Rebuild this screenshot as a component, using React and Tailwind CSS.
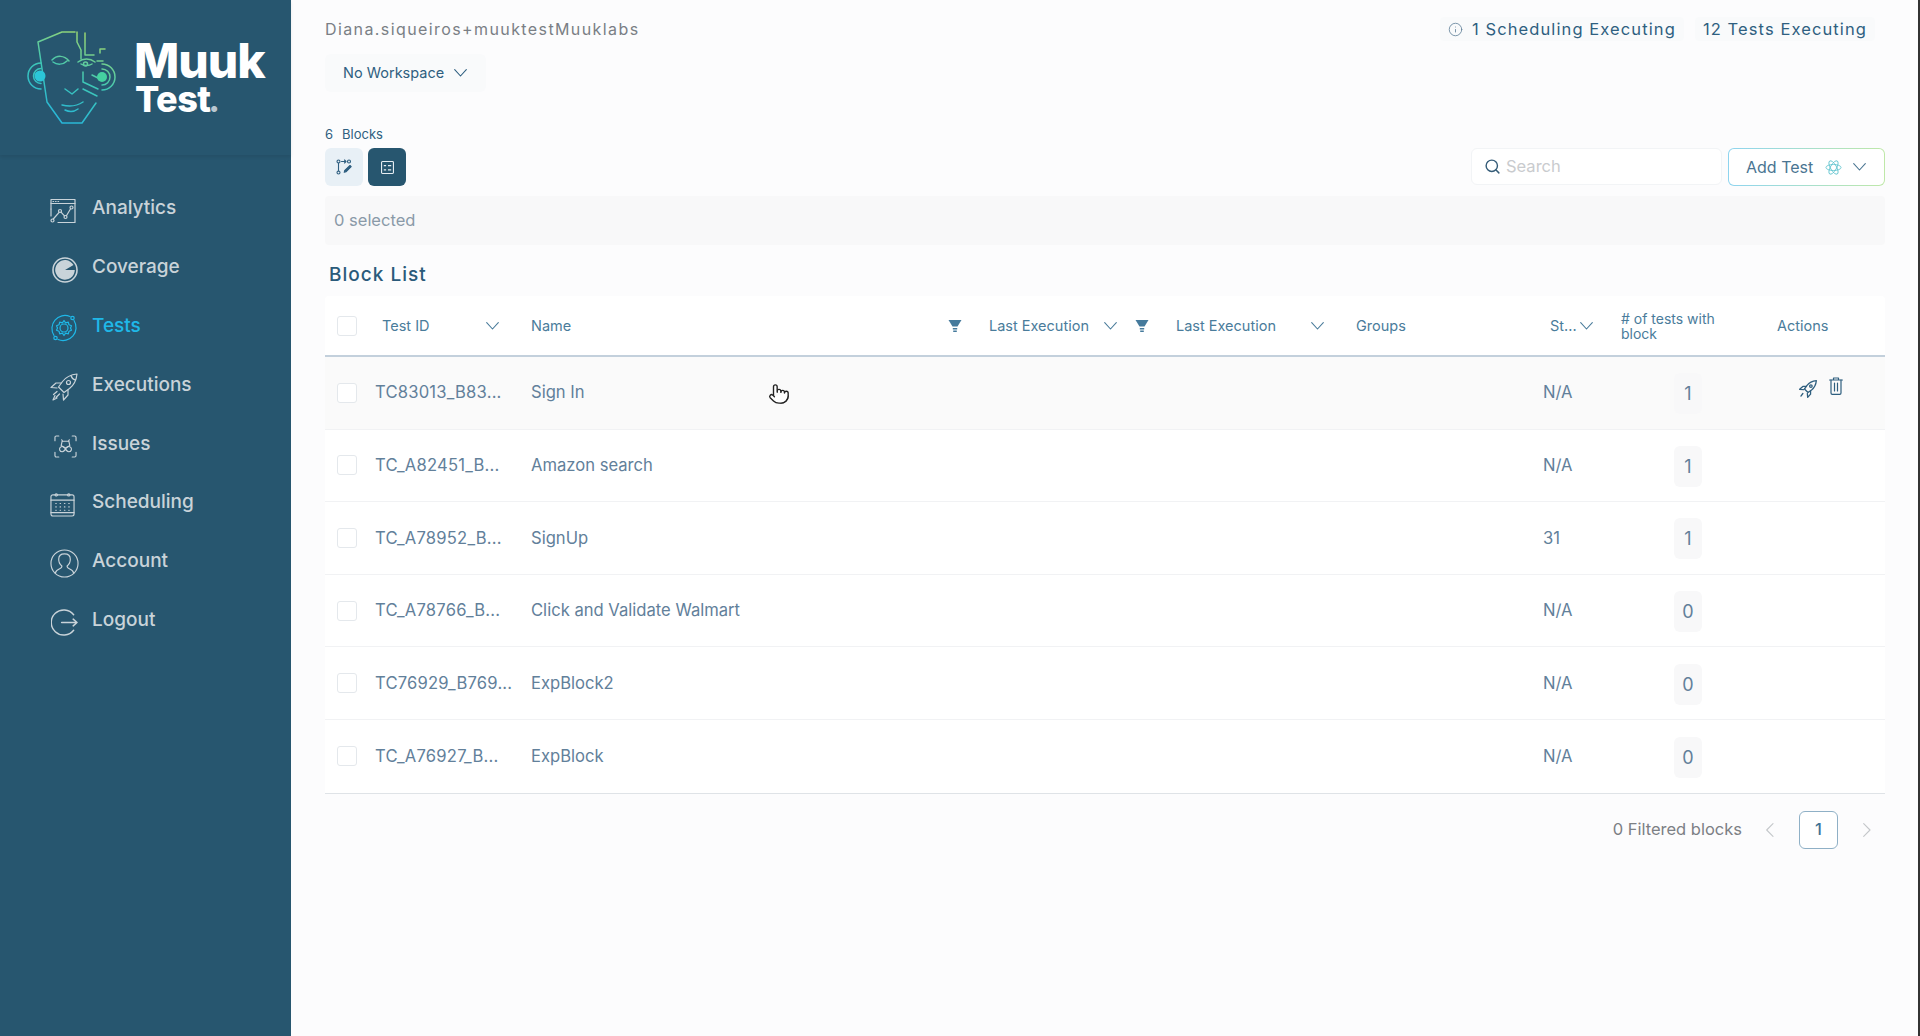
import { Search, Info, Pointer } from 'lucide-react';

const navStroke = { fill: 'none', stroke: 'currentColor', strokeWidth: 1.2, strokeLinecap: 'round', strokeLinejoin: 'round' };

function Chevron({ className = '', dir = 'down' }) {
  const d = { down: 'M.7.7 6.5 7 12.3.7', left: 'M7 .7.7 7 7 13.300', right: 'M.7.7 7 7 .7 13.300' }[dir];
  const box = dir === 'down' ? { viewBox: '0 0 13 8', size: 'w-[13px] h-[8px]' } : { viewBox: '0 0 8 14', size: 'w-[8px] h-[14px]' };
  return (
    <svg viewBox={box.viewBox} className={`${box.size} shrink-0 ${className}`} fill="none" stroke="currentColor" strokeWidth="1.100" strokeLinecap="round" strokeLinejoin="round">
      <path d={d} />
    </svg>
  );
}

function FilterIcon({ className = '' }) {
  return (
    <svg viewBox="0 0 14 14" className={`w-[14px] h-[14px] text-[#457a9c] ${className}`} fill="currentColor">
      <path d="M0.500 1h13L9.500 7.500h-5z" />
      <path d="M4.800 9h4.400v1.500H4.800zM5.200 11.500h3.600V13H5.200z" />
    </svg>
  );
}

function AnalyticsIcon() {
  return (
    <svg viewBox="0 0 26 26" className="w-[26px] h-[26px]" {...navStroke}>
      <path d="M1 11V1.500h24v23H8" />
      <path d="M1 5.500h24" />
      <path d="M3 3.500h.6M5.500 3.500h.6M8 3.500h.6" />
      <path d="M1 11v7" />
      <circle cx="2.500" cy="22.500" r="1.500" />
      <circle cx="10" cy="13" r="1.500" />
      <circle cx="15.500" cy="19" r="1.500" />
      <circle cx="21.500" cy="9.500" r="1.500" />
      <path d="M3.300 21l5.800-6.700M11 14.200l3.500 3.600M16.400 17.700l4.200-6.900" />
    </svg>
  );
}

function CoverageIcon() {
  return (
    <svg viewBox="0 0 26 26" className="w-[26px] h-[26px] ml-[2px]">
      <circle cx="13" cy="13" r="12" fill="none" stroke="currentColor" strokeWidth="1.600" />
      <path d="M13 13l8.500-5A9.800 9.800 0 1 0 22.800 13z" fill="currentColor" />
    </svg>
  );
}

function TestsIcon() {
  return (
    <svg viewBox="0 0 28 28" className="w-[28px] h-[28px]" {...navStroke}>
      <path d="M4 21.500A13 13 0 0 1 20 2.500" />
      <path d="M24 6.500A13 13 0 0 1 8 25.500" />
      <circle cx="22.500" cy="4" r="1.700" />
      <circle cx="5.500" cy="24" r="1.700" />
      <circle cx="14" cy="14" r="4" />
      <path d="M14 6.500l1.600 2.300 2.700-.7.7 2.700 2.500 1-1 2.200 1 2.200-2.500 1-.7 2.700-2.700-.7-1.600 2.300-1.600-2.300-2.700.7-.7-2.700-2.500-1 1-2.200-1-2.200 2.500-1 .7-2.700 2.700.7z" />
    </svg>
  );
}

function RocketIcon() {
  return (
    <svg viewBox="0 0 28 28" className="w-[28px] h-[28px]" {...navStroke}>
      <path d="M27 1c-6 .6-11 3-14.500 7.500L8.500 14l5.500 5.500 5.500-4C24 12 26.400 7 27 1z" />
      <path d="M21 2.500c.5 2 2 3.800 4.500 4.500" />
      <circle cx="18.500" cy="9.500" r="2" />
      <path d="M11 10H6L1 14.500l6 .5" />
      <path d="M18 17v5l-4.500 5-.5-6" />
      <path d="M7 18.500l-3.500 3M9.500 21l-3.500 3.500M5 22.500L3 27l4-2" />
    </svg>
  );
}

function IssuesIcon() {
  return (
    <svg viewBox="0 0 24 24" className="w-[23px] h-[23px] ml-[4px]" {...navStroke}>
      <path d="M1 6V2.500C1 1.600 1.600 1 2.500 1H5M19 1h2.500c.9 0 1.500.6 1.500 1.500V6M23 18v3.500c0 .9-.6 1.500-1.500 1.500H19M5 23H2.500C1.600 23 1 22.400 1 21.500V18" />
      <path d="M9 6.500l-1-1.500M15 6.500l1-1.500" />
      <path d="M8.500 6.500h7l1 4.500-4.500 3-4.500-3z" />
      <path d="M12 14c-1.500-2.500-4-2.500-5.500-1-1.500 1.800-.5 4.500 2 4.500 1.500 0 3-1.500 3.500-3.500zM12 14c1.500-2.500 4-2.500 5.500-1 1.500 1.800.5 4.500-2 4.500-1.500 0-3-1.500-3.500-3.500z" />
    </svg>
  );
}

function SchedulingIcon() {
  return (
    <svg viewBox="0 0 26 26" className="w-[25px] h-[25px]" {...navStroke}>
      <rect x="1" y="3" width="24" height="22" rx="2" />
      <path d="M1 8.500h24M1 21.500h24" />
      <circle cx="6.500" cy="3" r="1.200" />
      <circle cx="19.500" cy="3" r="1.200" />
      <path strokeDasharray="0.5 4" d="M6 12h15M6 15.500h15M6 19h15" />
    </svg>
  );
}

function AccountIcon() {
  return (
    <svg viewBox="0 0 30 30" className="w-[29px] h-[29px]" {...navStroke}>
      <circle cx="15" cy="15" r="14" />
      <path d="M5.500 25c.5-2.500 2-3.500 4.500-4.500 1.800-.7 2.500-1.500 2.300-3-2-1.500-3.300-4-3.300-7C9 7 11.500 5 15 5s6 2 6 5.500c0 3-1.300 5.500-3.300 7-.2 1.500.5 2.300 2.300 3 2.500 1 4 2 4.500 4.500" />
    </svg>
  );
}

function LogoutIcon() {
  return (
    <svg viewBox="0 0 28 28" className="w-[27px] h-[27px] ml-[1px]" fill="none" stroke="currentColor" strokeWidth="1.500" strokeLinecap="round" strokeLinejoin="round">
      <path d="M23.500 6A13 13 0 1 0 23.500 22" />
      <path d="M11 14h16M23 10.500l4 3.500-4 3.500" />
    </svg>
  );
}

const navItems = [
  { label: 'Analytics', Icon: AnalyticsIcon },
  { label: 'Coverage', Icon: CoverageIcon },
  { label: 'Tests', Icon: TestsIcon, active: true },
  { label: 'Executions', Icon: RocketIcon },
  { label: 'Issues', Icon: IssuesIcon },
  { label: 'Scheduling', Icon: SchedulingIcon },
  { label: 'Account', Icon: AccountIcon },
  { label: 'Logout', Icon: LogoutIcon },
];

const rows = [
  { id: 'TC83013_B83...', name: 'Sign In', status: 'N/A', count: 1, hovered: true },
  { id: 'TC_A82451_B...', name: 'Amazon search', status: 'N/A', count: 1 },
  { id: 'TC_A78952_B...', name: 'SignUp', status: '31', count: 1 },
  { id: 'TC_A78766_B...', name: 'Click and Validate Walmart', status: 'N/A', count: 0 },
  { id: 'TC76929_B769...', name: 'ExpBlock2', status: 'N/A', count: 0 },
  { id: 'TC_A76927_B...', name: 'ExpBlock', status: 'N/A', count: 0 },
];

const tableCols = 'grid grid-cols-[50px_156px_431px_169px_215px_187px_78px_156px_118px]';

function Logo() {
  return (
    <div className="h-[155px] flex items-start shadow-[0_2px_3px_rgba(0,0,0,0.08)]">
      <svg viewBox="25 28 95 100" className="w-[95px] h-[100px] ml-[25px] mt-[28px]" fill="none" strokeWidth="1.500" strokeLinecap="round" strokeLinejoin="round">
        <defs>
          <linearGradient id="face" gradientUnits="userSpaceOnUse" x1="95" y1="30" x2="55" y2="125">
            <stop offset="0" stopColor="#a6d667" />
            <stop offset="0.5" stopColor="#3ec7b6" />
            <stop offset="1" stopColor="#25b4dc" />
          </linearGradient>
        </defs>
        <g stroke="url(#face)">
          <path d="M75 32H62L38 42l9 60 15 21h20l14-20" />
          <path d="M77 32v10l4 8v9M85 33v22h9M100 53v-4h5M97 61h6" />
          <path d="M52 60c5-5 12-5 17 1M53 62c4 3 10 3 14-1" />
          <path d="M78 62c5-4 12-4 17 0M81 64c3 2 8 2 11 0" />
          <circle cx="85.500" cy="64" r="2" />
          <path d="M65 89l7 5 6-5M62 105c8 2 15 1 21-3M65 110c4 2 9 2 13-1" />
          <path d="M83 72v10l15 7M92 75l8 4M83 89l14 7" />
          <path d="M41 63a13 13 0 0 0 0 26M41 68.500a7.500 7.500 0 0 0 0 15" />
          <path d="M102 64a13 13 0 0 1 0 26M102 69a8 8 0 0 1 0 16" />
        </g>
        <circle cx="40" cy="76" r="5.500" fill="#2bc6d8" />
        <circle cx="102" cy="77" r="5" fill="#45d0a0" />
      </svg>
      <div className="ml-[14px] mt-[38px] flex flex-col font-['Inter',sans-serif] font-extrabold text-white">
        <span className="text-[48px] leading-[46px] tracking-[-1px]">Muuk</span>
        <span className="text-[36px] leading-[30px] ml-[1px] tracking-[-0.5px]">Test<span className="text-[8px] text-[#b9c7d1] align-baseline">●</span></span>
      </div>
    </div>
  );
}

function Sidebar() {
  return (
    <aside className="w-[291px] shrink-0 bg-[#27566f] min-h-[1036px]">
      <Logo />
      <nav className="mt-[23.500px]">
        {navItems.map(({ label, Icon, active }) => (
          <div key={label} className={`h-[58.800px] flex items-center ${active ? 'text-[#1fb8e8]' : 'text-[#c9d3d9]'}`}>
            <span className="w-[92px] pl-[50px] flex items-center translate-y-[3px]"><Icon /></span>
            <span className="text-[19px] font-medium leading-none">{label}</span>
          </div>
        ))}
      </nav>
    </aside>
  );
}

function Checkbox() {
  return <div className="w-[20px] h-[20px] rounded-[3px] border border-[#e4e8ec] bg-white" />;
}

function BlockTable() {
  return (
    <div className="border-b border-[#dfe3e7]">
      <div className={`${tableCols} h-[61px] bg-white border-b-2 border-[#c3d0dc] rounded-t-[4px] text-[14.500px] text-[#4a7c9b]`}>
        <div className="flex items-center pl-3"><Checkbox /></div>
        <div className="flex items-center pl-[7px] pr-[32px]">
          <span className="flex-1">Test ID</span>
          <Chevron />
        </div>
        <div className="flex items-center">
          <span className="flex-1">Name</span>
          <FilterIcon />
        </div>
        <div className="flex items-center pl-[27px] pr-[14px]">
          <span className="flex-1">Last Execution</span>
          <Chevron />
        </div>
        <div className="flex items-center pr-[22px]">
          <FilterIcon className="ml-[4px] mr-[27px]" />
          <span className="flex-1">Last Execution</span>
          <Chevron />
        </div>
        <div className="flex items-center pl-[10px]">Groups</div>
        <div className="flex items-center pl-[17px] pr-[18px]">
          <span className="flex-1">St...</span>
          <Chevron />
        </div>
        <div className="flex items-center pl-[10px] pr-[30px] text-[14px] leading-[15px]">
          # of tests with block
        </div>
        <div className="flex items-center pl-[10px]">Actions</div>
      </div>
      {rows.map((row, i) => (
        <div
          key={row.name}
          className={`${tableCols} h-[72.600px] text-[16.600px] text-[#62809a] ${row.hovered ? 'bg-[#fafafa]' : 'bg-white'} ${i < rows.length - 1 ? 'border-b border-[#f1f2f4]' : ''}`}
        >
          <div className="flex items-center pl-3"><Checkbox /></div>
          <div className="flex items-center whitespace-nowrap tracking-[0.200px]">{row.id}</div>
          <div className="flex items-center">{row.name}</div>
          <div />
          <div />
          <div />
          <div className="flex items-center pl-[10px]">{row.status}</div>
          <div className="flex items-center pl-[63px]">
            <span className="w-[28px] h-[41px] mt-[2px] flex items-center justify-center rounded-[6px] bg-[#f8f8f9] text-[18px]">{row.count}</span>
          </div>
          <div className="flex items-start pl-[32px] pt-[22px] gap-[12px] text-[#2f5f7f]">
            {row.hovered && (
              <>
                <svg viewBox="0 0 28 28" className="w-[18px] h-[18px] mt-[1px]" fill="none" stroke="currentColor" strokeWidth="2" strokeLinecap="round" strokeLinejoin="round">
                  <path d="M27 1c-6 .6-11 3-14.500 7.500L8.500 14l5.500 5.500 5.500-4C24 12 26.400 7 27 1z" />
                  <circle cx="18.500" cy="9.500" r="2" />
                  <path d="M11 10H6L1 14.500l6 .5M18 17v5l-4.500 5-.5-6M6 21l-3 4" />
                </svg>
                <svg viewBox="0 0 14 18" className="w-[14px] h-[18px] -mt-[2px]" fill="none" stroke="currentColor" strokeWidth="1.200" strokeLinecap="round" strokeLinejoin="round">
                  <path d="M.6 3h12.800M4.500 3V1h5v2" />
                  <path d="M2 3v13c0 .8.500 1.300 1.300 1.300h7.400c.8 0 1.300-.5 1.300-1.300V3" />
                  <path d="M5.500 6v8M8.500 6v8" />
                </svg>
              </>
            )}
          </div>
        </div>
      ))}
    </div>
  );
}

export default function App() {
  return (
    <div className="relative flex min-h-[1036px] font-['Inter',sans-serif] bg-[#fcfcfd] overflow-hidden">
      <Sidebar />
      <main className="flex-1 pl-[34px] pr-[33px]">
        <div className="flex justify-between items-center pt-[17px] h-[41px]">
          <span className="text-[16px] tracking-[1.400px] text-[#7a7f85]">Diana.siqueiros+muuktestMuuklabs</span>
          <div className="flex gap-[11px] mr-[10px] text-[16.500px] tracking-[1.100px] text-[#2f5f80]">
            <span className="flex items-center gap-[9px] h-[24px] px-[8px] rounded bg-[#f9fafb]">
              <Info className="w-[15px] h-[15px] text-[#5f7f98]" strokeWidth={1.300} />
              1 Scheduling Executing
            </span>
            <span className="flex items-center h-[24px] px-[8px] rounded bg-[#f9fafb]">12 Tests Executing</span>
          </div>
        </div>
        <button className="mt-[13px] h-[38px] w-[161px] flex items-center pl-[18px] gap-[10px] rounded-[6px] bg-[#f9fafb] text-[14.500px] text-[#2f5f80]">
          No Workspace
          <Chevron />
        </button>
        <div className="mt-[34px] flex gap-[9px] text-[13px] leading-[16px] text-[#2f5f80]">
          <span>6</span>
          <span>Blocks</span>
        </div>
        <div className="mt-[6px] flex justify-between">
          <div className="flex gap-[5px]">
            <button className="w-[38px] h-[38px] rounded-[6px] bg-[#e8f0f6] flex items-center justify-center text-[#2f5f80]">
              <svg viewBox="0 0 16 16" className="w-[16px] h-[16px]" fill="none" stroke="currentColor" strokeWidth="1.100" strokeLinecap="round" strokeLinejoin="round">
                <circle cx="2.500" cy="2.500" r="1.500" />
                <circle cx="2.500" cy="13.500" r="1.500" />
                <circle cx="13" cy="2.500" r="1.500" />
                <path d="M2.500 4v8M5.500 2.500h4M8.500 1l1.500 1.500L8.500 4" />
                <path d="M14 6.500l1.200 1.200-5 5-2 .6.600-2z" fill="currentColor" />
              </svg>
            </button>
            <button className="w-[38px] h-[38px] rounded-[6px] bg-[#27566f] flex items-center justify-center text-[#e6edf2]">
              <svg viewBox="0 0 14 14" className="w-[13px] h-[13px]" fill="none" stroke="currentColor" strokeWidth="1.200">
                <rect x="0.600" y="0.600" width="12.800" height="12.800" rx="1" />
                <path d="M3 5h2.500M3 9.500h2.500M7.500 5H11M7.500 9.500H11" />
              </svg>
            </button>
          </div>
          <div className="flex gap-[6px]">
            <div className="w-[251px] h-[37px] flex items-center gap-[5px] pl-[12px] rounded-[6px] bg-white border border-[#f2f4f6] text-[16.500px] text-[#c9cbce]">
              <Search className="w-[17px] h-[17px] text-[#355c78]" strokeWidth={2} />
              Search
            </div>
            <div className="w-[157px] h-[38px] p-px rounded-[6px] bg-gradient-to-r from-[#8ed4ef] to-[#bfe8a8]">
              <button className="w-full h-full flex items-center pl-[17px] rounded-[5px] bg-white text-[16px] text-[#4a7592]">
                Add Test
                <svg viewBox="0 0 18 18" className="w-[17px] h-[17px] ml-[12px]" fill="none" stroke="#63c5cf" strokeWidth="0.900">
                  <ellipse cx="9" cy="9" rx="8" ry="3.200" />
                  <ellipse cx="9" cy="9" rx="8" ry="3.200" transform="rotate(60 9 9)" />
                  <ellipse cx="9" cy="9" rx="8" ry="3.200" transform="rotate(120 9 9)" />
                </svg>
                <Chevron className="ml-[11px]" />
              </button>
            </div>
          </div>
        </div>
        <div className="mt-[10px] h-[49px] flex items-center pl-[9px] rounded-[4px] bg-[#f8f8f9] text-[16.500px] text-[#8a9aa8]">0 selected</div>
        <h2 className="mt-[18px] ml-[4px] text-[19px] font-medium leading-[24px] tracking-[1px] text-[#2a5a7a]">Block List</h2>
        <div className="mt-[9px]"><BlockTable /></div>
        <div className="mt-[17px] flex items-center justify-end pr-[14px] text-[16.500px] text-[#7c8085]">
          <span className="mr-[24px]">0 Filtered blocks</span>
          <Chevron dir="left" className="text-[#c4c7ca] mr-[25px]" />
          <span className="w-[39px] h-[38px] flex items-center justify-center rounded-[6px] border border-[#8fb0c6] bg-white font-medium text-[#3f7396] mr-[25px]">1</span>
          <Chevron dir="right" className="text-[#c4c7ca]" />
        </div>
      </main>
      <div className="w-[2px] shrink-0 bg-[#333]" />
      <Pointer className="absolute left-[768px] top-[383px] w-[22px] h-[22px] text-[#222] fill-white" strokeWidth={1.500} />
    </div>
  );
}
